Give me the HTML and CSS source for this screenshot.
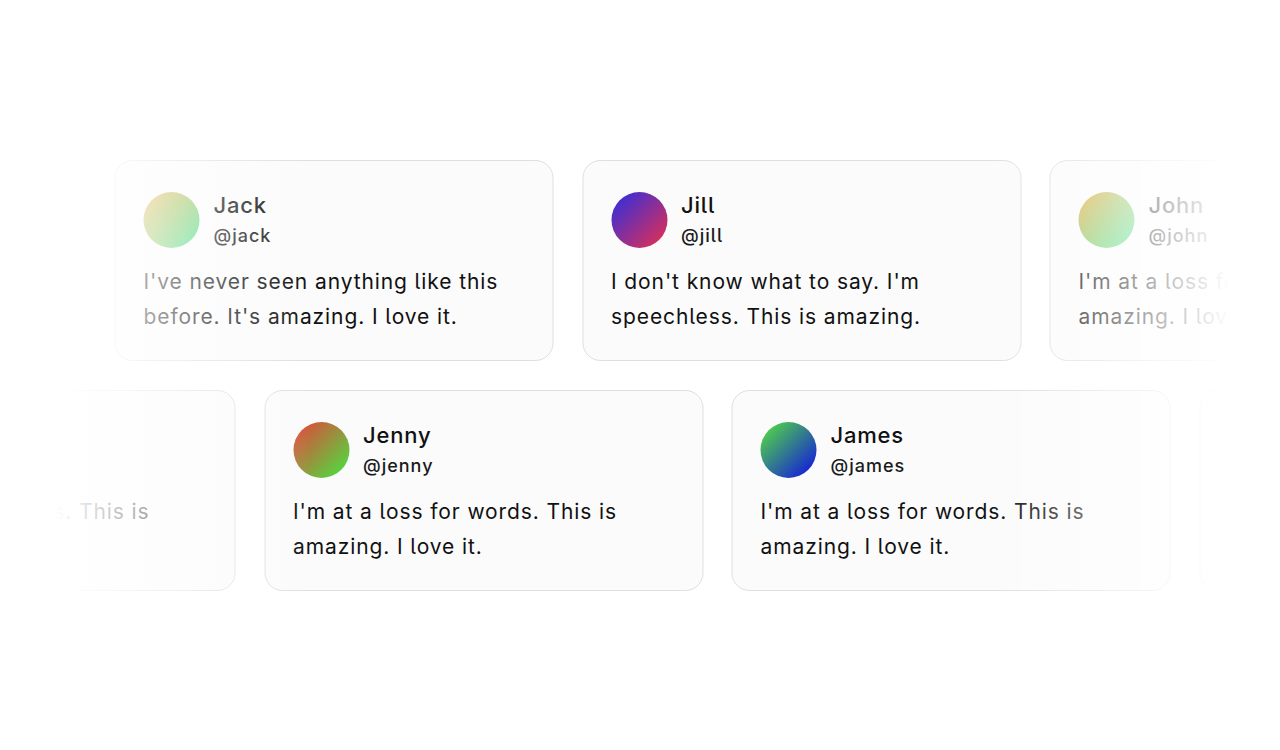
FILE: index.html
```html
<!DOCTYPE html>
<html lang="en">
<head>
<meta charset="utf-8">
<title>Testimonials</title>
<link rel="stylesheet" href="styles.css">
</head>
<body>
<main class="wall">
  <div class="track track-a">
    <article class="card">
      <header class="who">
        <span class="avatar av-gold"></span>
        <div class="names"><div class="name">Jack</div><div class="handle">@jack</div></div>
      </header>
      <p class="quote">I've never seen anything like this before. It's amazing. I love it.</p>
    </article>
    <article class="card">
      <header class="who">
        <span class="avatar av-violet"></span>
        <div class="names"><div class="name">Jill</div><div class="handle">@jill</div></div>
      </header>
      <p class="quote">I don't know what to say. I'm speechless. This is amazing.</p>
    </article>
    <article class="card">
      <header class="who">
        <span class="avatar av-gold"></span>
        <div class="names"><div class="name">John</div><div class="handle">@john</div></div>
      </header>
      <p class="quote">I'm at a loss for words. This is amazing. I love it.</p>
    </article>
  </div>
  <div class="track track-b">
    <article class="card">
      <header class="who">
        <span class="avatar av-gold"></span>
        <div class="names"><div class="name">Jane</div><div class="handle">@jane</div></div>
      </header>
      <p class="quote">I'm at a loss for words. This is amazing. I love it.</p>
    </article>
    <article class="card">
      <header class="who">
        <span class="avatar av-rust"></span>
        <div class="names"><div class="name">Jenny</div><div class="handle">@jenny</div></div>
      </header>
      <p class="quote">I'm at a loss for words. This is amazing. I love it.</p>
    </article>
    <article class="card">
      <header class="who">
        <span class="avatar av-sea"></span>
        <div class="names"><div class="name">James</div><div class="handle">@james</div></div>
      </header>
      <p class="quote">I'm at a loss for words. This is amazing. I love it.</p>
    </article>
    <article class="card">
      <header class="who">
        <span class="avatar av-violet"></span>
        <div class="names"><div class="name">Jill</div><div class="handle">@jill</div></div>
      </header>
      <p class="quote">I don't know what to say. I'm speechless. This is amazing.</p>
    </article>
  </div>
</main>
</body>
</html>
```
FILE: styles.css
```css
* { box-sizing: border-box; }

html, body {
  margin: 0;
  background: #ffffff;
}

body {
  font-family: "Inter", "Liberation Sans", sans-serif;
  font-feature-settings: "cv05" 1;
  color: #111111;
  -webkit-font-smoothing: antialiased;
}

.wall {
  position: relative;
  height: 750px;
  overflow: hidden;
  padding-top: 160px;
  display: flex;
  flex-direction: column;
  gap: 29px;
}

.wall::before,
.wall::after {
  content: "";
  position: absolute;
  top: 0;
  bottom: 0;
  pointer-events: none;
  z-index: 2;
}

.wall::before {
  left: 0;
  width: 320px;
  background: linear-gradient(to right, #ffffff 55px, rgba(255, 255, 255, 0) 310px);
}

.wall::after {
  right: 0;
  width: 290px;
  background: linear-gradient(to right, rgba(255, 255, 255, 0) 0, #ffffff 240px);
}

.track {
  display: flex;
  gap: 28.5px;
  width: max-content;
}

.track-a { transform: translateX(114.5px); }
.track-b { transform: translateX(-203.5px); }

.card {
  flex: none;
  width: 439px;
  height: 201px;
  border: 1.5px solid #dfdfdf;
  border-radius: 18px;
  background: #fbfbfb;
  padding: 29px 28px 27px;
}

.who {
  display: flex;
  align-items: center;
  gap: 14px;
}

.avatar {
  flex: none;
  width: 56px;
  height: 56px;
  border-radius: 50%;
}

.av-gold   { background: linear-gradient(135deg, #d8b040 10%, #4fdc88 90%); }
.av-violet { background: linear-gradient(135deg, #3a2ed6 10%, #d8305a 90%); }
.av-rust   { background: linear-gradient(135deg, #da4f3a 10%, #52d840 90%); }
.av-sea    { background: linear-gradient(135deg, #50d04a 10%, #1420d8 90%); }

.names {
  display: flex;
  flex-direction: column;
}

.name {
  font-size: 22px;
  line-height: 30px;
  font-weight: 500;
  letter-spacing: 0.8px;
  color: #111111;
}

.handle {
  margin-top: 2px;
  font-size: 18px;
  line-height: 28px;
  font-weight: 500;
  letter-spacing: 1px;
  color: #1a1a1a;
}

.quote {
  margin: 14px 0 0;
  font-size: 21px;
  line-height: 35px;
  letter-spacing: 0.9px;
  color: #111111;
}
```
